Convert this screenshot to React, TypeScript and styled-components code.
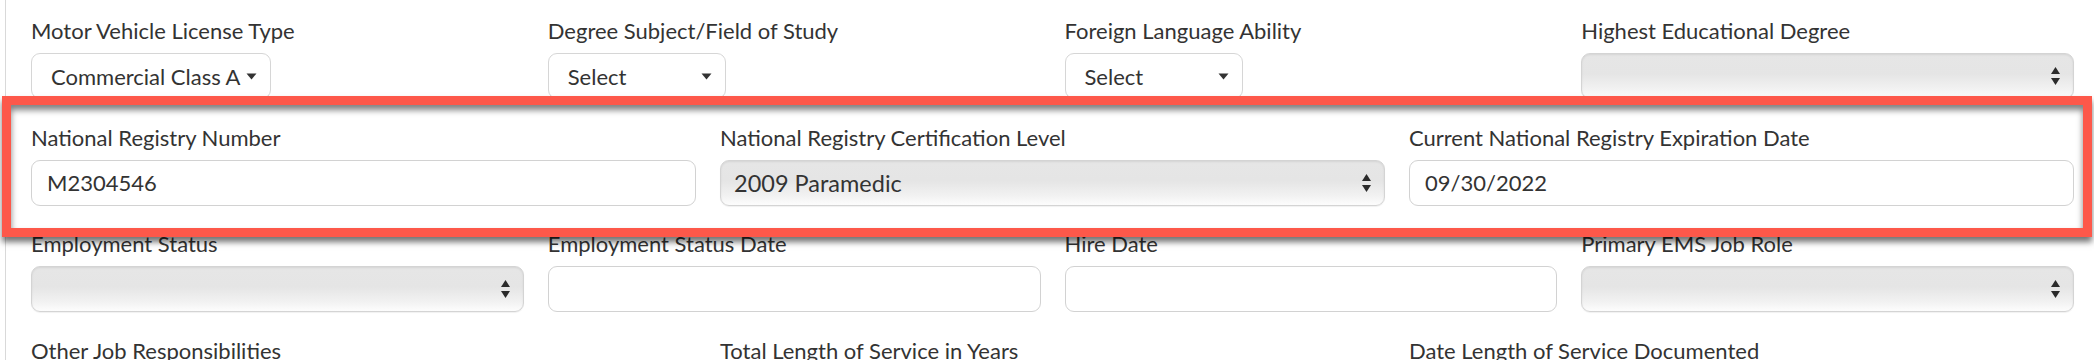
import styled, { createGlobalStyle } from 'styled-components';

const GlobalStyle = createGlobalStyle`
  html, body {
    margin: 0;
    padding: 0;
    background: #ffffff;
  }
  body {
    font-family: Lato, "Open Sans", "Liberation Sans", sans-serif;
    color: #333333;
  }
`;

const SelectArrows = () => (
  <svg width="11" height="20" viewBox="0 0 11 20">
    <path d="M5.5 1 L10 8 L1 8 Z" fill="#2b2b2b" />
    <path d="M5.5 19 L10 12 L1 12 Z" fill="#2b2b2b" />
  </svg>
);

const Caret = () => (
  <svg width="11" height="7" viewBox="0 0 11 7">
    <path d="M0.5 0.5 L10.5 0.5 L5.5 6.5 Z" fill="#333333" />
  </svg>
);

const App = () => {
  return (
    <>
      <GlobalStyle />
      <Page>
        <Panel>
          <Row $cols={4}>
            <FormGroup>
              <Label>Motor Vehicle License Type</Label>
              <DropButton>
                Commercial Class A
                <Caret />
              </DropButton>
            </FormGroup>
            <FormGroup>
              <Label>Degree Subject/Field of Study</Label>
              <DropButton $width={178} $spread>
                Select
                <Caret />
              </DropButton>
            </FormGroup>
            <FormGroup>
              <Label>Foreign Language Ability</Label>
              <DropButton $width={178} $spread>
                Select
                <Caret />
              </DropButton>
            </FormGroup>
            <FormGroup>
              <Label>Highest Educational Degree</Label>
              <NativeSelect>
                <span />
                <SelectArrows />
              </NativeSelect>
            </FormGroup>
          </Row>

          <Row $cols={3}>
            <FormGroup>
              <Label>National Registry Number</Label>
              <TextInput>M2304546</TextInput>
            </FormGroup>
            <FormGroup>
              <Label>National Registry Certification Level</Label>
              <NativeSelect>
                <span>2009 Paramedic</span>
                <SelectArrows />
              </NativeSelect>
            </FormGroup>
            <FormGroup>
              <Label>Current National Registry Expiration Date</Label>
              <TextInput>09/30/2022</TextInput>
            </FormGroup>
          </Row>

          <Row $cols={4}>
            <FormGroup>
              <Label>Employment Status</Label>
              <NativeSelect>
                <span />
                <SelectArrows />
              </NativeSelect>
            </FormGroup>
            <FormGroup>
              <Label>Employment Status Date</Label>
              <TextInput />
            </FormGroup>
            <FormGroup>
              <Label>Hire Date</Label>
              <TextInput />
            </FormGroup>
            <FormGroup>
              <Label>Primary EMS Job Role</Label>
              <NativeSelect>
                <span />
                <SelectArrows />
              </NativeSelect>
            </FormGroup>
          </Row>

          <Row $cols={3}>
            <FormGroup>
              <Label>Other Job Responsibilities</Label>
            </FormGroup>
            <FormGroup>
              <Label>Total Length of Service in Years</Label>
            </FormGroup>
            <FormGroup>
              <Label>Date Length of Service Documented</Label>
            </FormGroup>
          </Row>
        </Panel>

        <Highlight />
      </Page>
    </>
  );
};

export default App;

const Page = styled.div`
  position: relative;
  width: 2094px;
  height: 360px;
  overflow: hidden;
`;

const Panel = styled.div`
  margin-left: 5px;
  border-left: 1px solid #d9d9d9;
  padding: 16px 20px 0 25px;
  min-height: 360px;
  box-sizing: border-box;
`;

const Row = styled.div<{ $cols: number }>`
  display: grid;
  grid-template-columns: repeat(${(p) => p.$cols}, 1fr);
  column-gap: 24px;
`;

const FormGroup = styled.div`
  display: flex;
  flex-direction: column;
  align-items: flex-start;
  margin-bottom: 23.5px;
  min-width: 0;
`;

const Label = styled.label`
  display: block;
  font-size: 22px;
  line-height: 30px;
  color: #333333;
  margin-bottom: 7px;
  white-space: nowrap;
`;

const controlBase = `
  box-sizing: border-box;
  height: 46px;
  display: flex;
  align-items: center;
  font-family: Lato, "Open Sans", "Liberation Sans", sans-serif;
  color: #333333;
`;

const TextInput = styled.div`
  ${controlBase}
  width: 100%;
  padding: 0 15px;
  font-size: 22px;
  background: #ffffff;
  border: 1px solid #d2d2d2;
  border-radius: 9px;
`;

const NativeSelect = styled.div`
  ${controlBase}
  width: 100%;
  justify-content: space-between;
  padding: 0 12px 0 13px;
  font-size: 23.5px;
  border: 1px solid #d4d4d4;
  border-radius: 9px;
  background: linear-gradient(#e6e6e6 0%, #e5e5e5 45%, #f2f2f2 80%, #fdfdfd 100%);
  box-shadow: inset 0 1px 2px rgba(0, 0, 0, 0.08), 0 1px 1px rgba(0, 0, 0, 0.06);
`;

const DropButton = styled.div<{ $width?: number; $spread?: boolean }>`
  ${controlBase}
  width: ${(p) => (p.$width ? `${p.$width}px` : 'auto')};
  justify-content: ${(p) => (p.$spread ? 'space-between' : 'flex-start')};
  gap: 5px;
  padding: 0 13px 0 19px;
  font-size: 22px;
  background: #ffffff;
  border: 1px solid #d6d6d6;
  border-radius: 9px;
`;

const Highlight = styled.div`
  position: absolute;
  left: 2px;
  top: 96px;
  width: 2090px;
  height: 141px;
  box-sizing: border-box;
  border: 9px solid #fd584a;
  pointer-events: none;
  box-shadow:
    0 5px 6px rgba(0, 0, 0, 0.55),
    inset 0 5px 6px rgba(0, 0, 0, 0.5);
`;
